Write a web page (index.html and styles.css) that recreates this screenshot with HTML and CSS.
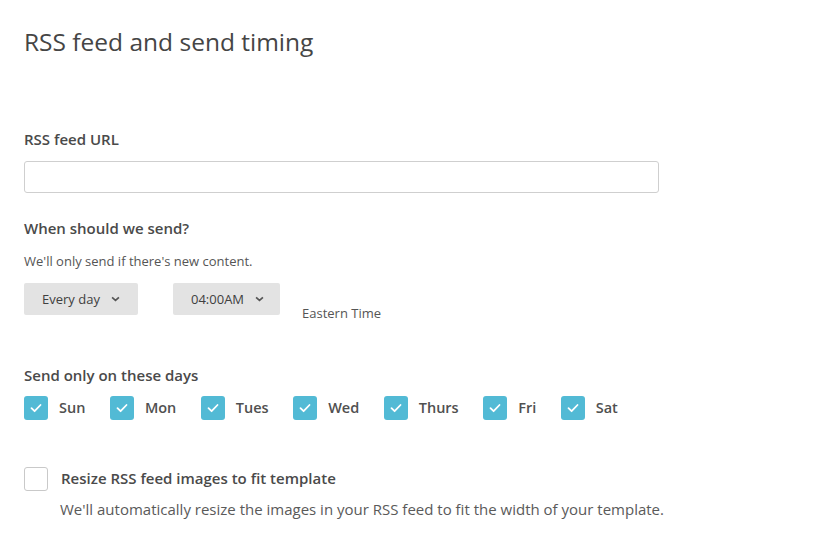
FILE: index.html
```html
<!DOCTYPE html>
<html lang="en">
<head>
<meta charset="utf-8">
<title>RSS feed and send timing</title>
<link rel="stylesheet" href="styles.css">
</head>
<body>
<main class="page">
  <h1 class="title">RSS feed and send timing</h1>

  <label class="field-label url-label" for="rss">RSS feed URL</label>
  <input class="text-input" id="rss" type="text">

  <h2 class="field-label when-label">When should we send?</h2>
  <p class="hint">We'll only send if there's new content.</p>
  <div class="schedule">
    <button class="select select-freq" type="button">Every day <svg class="chev" viewBox="0 0 10 6" width="9" height="6"><path d="M1.2 1.2 L5 4.6 L8.8 1.2" fill="none" stroke="#555" stroke-width="1.9"/></svg></button>
    <button class="select select-time" type="button">04:00AM <svg class="chev" viewBox="0 0 10 6" width="9" height="6"><path d="M1.2 1.2 L5 4.6 L8.8 1.2" fill="none" stroke="#555" stroke-width="1.9"/></svg></button>
    <span class="tz">Eastern Time</span>
  </div>

  <h2 class="field-label days-label">Send only on these days</h2>
  <div class="days">
    <label class="day"><span class="box checked"><svg viewBox="0 0 24 24" width="24" height="24"><path d="M7.5 12.2 L10.6 15.2 L16.5 9" fill="none" stroke="#fff" stroke-width="1.8" stroke-linecap="round" stroke-linejoin="round"/></svg></span>Sun</label>
    <label class="day"><span class="box checked"><svg viewBox="0 0 24 24" width="24" height="24"><path d="M7.5 12.2 L10.6 15.2 L16.5 9" fill="none" stroke="#fff" stroke-width="1.8" stroke-linecap="round" stroke-linejoin="round"/></svg></span>Mon</label>
    <label class="day"><span class="box checked"><svg viewBox="0 0 24 24" width="24" height="24"><path d="M7.5 12.2 L10.6 15.2 L16.5 9" fill="none" stroke="#fff" stroke-width="1.8" stroke-linecap="round" stroke-linejoin="round"/></svg></span>Tues</label>
    <label class="day"><span class="box checked"><svg viewBox="0 0 24 24" width="24" height="24"><path d="M7.5 12.2 L10.6 15.2 L16.5 9" fill="none" stroke="#fff" stroke-width="1.8" stroke-linecap="round" stroke-linejoin="round"/></svg></span>Wed</label>
    <label class="day"><span class="box checked"><svg viewBox="0 0 24 24" width="24" height="24"><path d="M7.5 12.2 L10.6 15.2 L16.5 9" fill="none" stroke="#fff" stroke-width="1.8" stroke-linecap="round" stroke-linejoin="round"/></svg></span>Thurs</label>
    <label class="day"><span class="box checked"><svg viewBox="0 0 24 24" width="24" height="24"><path d="M7.5 12.2 L10.6 15.2 L16.5 9" fill="none" stroke="#fff" stroke-width="1.8" stroke-linecap="round" stroke-linejoin="round"/></svg></span>Fri</label>
    <label class="day"><span class="box checked"><svg viewBox="0 0 24 24" width="24" height="24"><path d="M7.5 12.2 L10.6 15.2 L16.5 9" fill="none" stroke="#fff" stroke-width="1.8" stroke-linecap="round" stroke-linejoin="round"/></svg></span>Sat</label>
  </div>

  <div class="resize">
    <label class="resize-row"><span class="box empty"></span><span class="resize-label">Resize RSS feed images to fit template</span></label>
    <p class="resize-desc">We'll automatically resize the images in your RSS feed to fit the width of your template.</p>
  </div>
</main>
</body>
</html>
```

FILE: styles.css
```css
* { box-sizing: border-box; }
html, body { margin: 0; padding: 0; background: #fff; }
body {
  font-family: "Open Sans", "Liberation Sans", sans-serif;
  color: #4d4d4d;
}
.page {
  padding: 24px 24px 0 24px;
  display: flex;
  flex-direction: column;
  align-items: flex-start;
}
.title {
  margin: 0;
  font-size: 24.5px;
  line-height: 36px;
  font-weight: 400;
  color: #454545;
}
.field-label {
  margin: 0;
  font-size: 15px;
  line-height: 20px;
  font-weight: 600;
  color: #4a4a4a;
}
.url-label { margin-top: 69px; margin-bottom: 12px; }
.text-input {
  width: 635px;
  height: 32px;
  border: 1px solid #cfcfcf;
  border-radius: 3px;
  background: #fff;
  font: inherit;
  margin: 0;
}
.when-label { margin-top: 25px; }
.hint {
  margin: 14px 0 0 0;
  font-size: 13px;
  line-height: 18px;
  color: #555;
}
.schedule {
  display: flex;
  align-items: flex-start;
  margin-top: 13px;
}
.select {
  height: 32px;
  border: 0;
  border-radius: 2px;
  background: #e3e3e3;
  font-family: inherit;
  font-size: 13px;
  font-weight: 400;
  color: #404040;
  display: flex;
  align-items: center;
  padding: 0 0 0 18px;
  margin: 0;
}
.chev { margin-left: 11px; }
.select-freq { width: 114px; }
.select-time { width: 107px; margin-left: 35px; }
.tz {
  margin-left: 22px;
  margin-top: 21px;
  font-size: 13px;
  line-height: 18px;
  color: #555;
}
.days-label { margin-top: 43px; }
.days {
  display: flex;
  margin-top: 11px;
}
.day {
  display: flex;
  align-items: center;
  font-size: 14.5px;
  line-height: 24px;
  font-weight: 600;
  color: #505050;
  margin-right: 24.5px;
}
.box {
  width: 24px;
  height: 24px;
  border-radius: 3px;
  margin-right: 11px;
  display: block;
  flex: none;
}
.box svg { display: block; }
.checked { background: #52bad5; }
.empty {
  background: #fff;
  border: 1px solid #c9c9c9;
  margin-right: 13px;
}
.resize { margin-top: 47px; }
.resize-row {
  display: flex;
  align-items: center;
}
.resize-label {
  font-size: 15px;
  line-height: 24px;
  font-weight: 600;
  color: #4a4a4a;
  position: relative;
  top: -1px;
}
.resize-desc {
  margin: 8px 0 0 36px;
  font-size: 15px;
  line-height: 20px;
  color: #5a5a5a;
}
```
